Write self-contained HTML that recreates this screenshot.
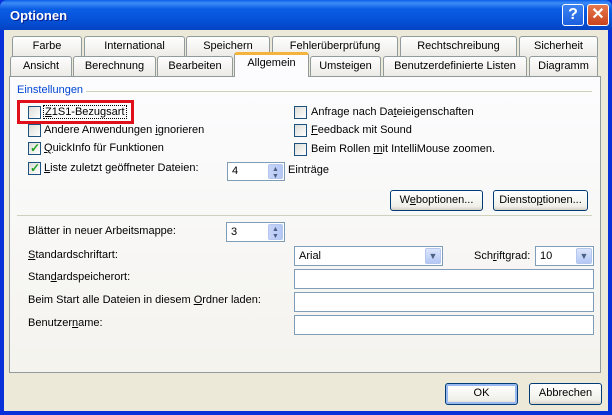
<!DOCTYPE html>
<html><head><meta charset="utf-8"><style>
*{box-sizing:border-box;margin:0;padding:0}
body{width:612px;height:415px;position:relative;overflow:hidden;background:#0831d9;font-family:"Liberation Sans",sans-serif;font-size:11px;color:#000}
.a{position:absolute;white-space:nowrap}
#title{left:0;top:0;width:612px;height:30px;background:linear-gradient(#0a5fe8 0%,#3d8bf6 10%,#0b5de5 30%,#0451d6 70%,#0542c2 100%);border-radius:7px 7px 0 0}
#body{left:4px;top:30px;width:604px;height:381px;background:#ece9d8}
.tab{position:absolute;height:21px;border:1px solid #919b9c;border-bottom:none;border-radius:3px 3px 0 0;background:linear-gradient(#fefefe,#ecebe6);text-align:center;line-height:19px;white-space:nowrap}
#panel{left:9px;top:76px;width:592px;height:297px;border:1px solid #919b9c;background:linear-gradient(#fcfcfe,#f4f3ee)}
.cb{position:absolute;width:13px;height:13px;border:1px solid #1c5180;background:linear-gradient(135deg,#dcdcd7,#fff)}
.ck{position:absolute;left:1px;top:-2px;color:#21a121;font-size:12px;font-weight:bold}
.in{position:absolute;background:#fff;border:1px solid #7f9db9}
.spin{position:absolute;right:1px;top:1px;width:15px;bottom:1px;background:linear-gradient(90deg,#c6d3f7,#b4c8f5);border-radius:2px;border:1px solid #b5c7ef;font-size:7px;color:#4d6185;text-align:center;line-height:7px;padding-top:1px}
.dd{position:absolute;right:1px;top:1px;width:16px;bottom:1px;background:linear-gradient(#dbe5fc,#b4c8f5);border:1px solid #b5c7ef;border-radius:2px;color:#4d6185;text-align:center;font-size:9px;line-height:15px}
.btn{position:absolute;border:1px solid #003c74;border-radius:3px;background:linear-gradient(#fff,#f0f0ea 80%,#d6d0c5);text-align:center;line-height:19px}
u{text-decoration:underline}
</style></head><body>
<div class="a" id="title"></div>
<div class="a" style="left:10px;top:8px;color:#fff;font-weight:bold;font-size:13px;text-shadow:1px 1px #0a1e8f">Optionen</div>
<div class="a" style="left:562px;top:4px;width:22px;height:22px;border:1px solid #fff;border-radius:3px;background:linear-gradient(#3c83f0,#1c5fe0);color:#fff;font-weight:bold;font-size:16px;text-align:center;line-height:20px">?</div>
<div class="a" style="left:587px;top:4px;width:22px;height:22px;border:1px solid #fff;border-radius:3px;background:linear-gradient(#e7794f,#c9431c);color:#fff;font-weight:bold;font-size:16px;text-align:center;line-height:20px">✕</div>
<div class="a" id="body"></div>
<div class="a" id="panel"></div>
<div class="tab" style="left:12px;top:36px;width:70px">Farbe</div>
<div class="tab" style="left:84px;top:36px;width:101px">International</div>
<div class="tab" style="left:186px;top:36px;width:84px">Speichern</div>
<div class="tab" style="left:272px;top:36px;width:126px">Fehlerüberprüfung</div>
<div class="tab" style="left:400px;top:36px;width:117px">Rechtschreibung</div>
<div class="tab" style="left:519px;top:36px;width:79px">Sicherheit</div>
<div class="tab" style="left:10px;top:56px;width:62px;height:20px">Ansicht</div>
<div class="tab" style="left:73px;top:56px;width:83px;height:20px">Berechnung</div>
<div class="tab" style="left:157px;top:56px;width:76px;height:20px">Bearbeiten</div>
<div class="tab" style="left:234px;top:52px;width:75px;height:25px;background:#fcfcfe;border-top:3px solid #f3b33d;line-height:17px">Allgemein</div>
<div class="tab" style="left:310px;top:56px;width:71px;height:20px">Umsteigen</div>
<div class="tab" style="left:383px;top:56px;width:144px;height:20px">Benutzerdefinierte Listen</div>
<div class="tab" style="left:529px;top:56px;width:69px;height:20px">Diagramm</div>

<div class="a" style="left:17px;top:84px;color:#0046d5">Einstellungen</div>
<div class="a" style="left:86px;top:91px;width:506px;height:1px;background:#d0d0bf"></div>
<div class="a" style="left:17px;top:100px;width:117px;height:24px;border:3px solid #e0101a"></div>
<div class="cb" style="left:28px;top:106px"></div><div class="a" style="left:43px;top:105px;border:1px dotted #000;padding:0 1px"><u>Z</u>1S1-Bezugsart</div>
<div class="cb" style="left:28px;top:124px"></div><div class="a" style="left:44px;top:124px">Andere Anwendungen <u>i</u>gnorieren</div>
<div class="cb" style="left:28px;top:142px"><span class="ck">✓</span></div><div class="a" style="left:44px;top:142px"><u>Q</u>uickInfo für Funktionen</div>
<div class="cb" style="left:28px;top:162px"><span class="ck">✓</span></div><div class="a" style="left:44px;top:162px"><u>L</u>iste zuletzt geöffneter Dateien:</div>
<div class="in" style="left:227px;top:162px;width:58px;height:19px"><span class="a" style="left:4px;top:2px">4</span><div class="spin">▲<br>▼</div></div>
<div class="a" style="left:288px;top:164px">Einträ<u>g</u>e</div>
<div class="cb" style="left:294px;top:106px"></div><div class="a" style="left:311px;top:106px">Anfrage nach Da<u>t</u>eieigenschaften</div>
<div class="cb" style="left:294px;top:124px"></div><div class="a" style="left:311px;top:124px"><u>F</u>eedback mit Sound</div>
<div class="cb" style="left:294px;top:143px"></div><div class="a" style="left:311px;top:143px">Beim Rollen <u>m</u>it IntelliMouse zoomen.</div>
<div class="btn" style="left:390px;top:190px;width:93px;height:21px">W<u>e</u>boptionen...</div>
<div class="btn" style="left:493px;top:190px;width:95px;height:21px">Diensto<u>p</u>tionen...</div>
<div class="a" style="left:17px;top:215px;width:575px;height:1px;background:#d0d0bf"></div>

<div class="a" style="left:28px;top:225px">Blätter in neuer Arbeitsmappe:</div>
<div class="in" style="left:226px;top:222px;width:59px;height:20px"><span class="a" style="left:4px;top:3px">3</span><div class="spin">▲<br>▼</div></div>
<div class="a" style="left:28px;top:249px"><u>S</u>tandardschriftart:</div>
<div class="in" style="left:294px;top:246px;width:149px;height:20px"><span class="a" style="left:4px;top:3px">Arial</span><div class="dd">▼</div></div>
<div class="a" style="left:474px;top:250px">Sch<u>r</u>iftgrad:</div>
<div class="in" style="left:535px;top:246px;width:59px;height:20px"><span class="a" style="left:4px;top:3px">10</span><div class="dd">▼</div></div>
<div class="a" style="left:28px;top:271px">Stan<u>d</u>ardspeicherort:</div>
<div class="in" style="left:294px;top:269px;width:300px;height:20px"></div>
<div class="a" style="left:28px;top:294px">Beim Start alle Dateien in diesem <u>O</u>rdner laden:</div>
<div class="in" style="left:294px;top:292px;width:300px;height:20px"></div>
<div class="a" style="left:28px;top:317px">Benutzer<u>n</u>ame:</div>
<div class="in" style="left:294px;top:315px;width:300px;height:20px"></div>

<div class="btn" style="left:445px;top:383px;width:73px;height:22px;border-color:#003c74;box-shadow:inset 0 0 0 2px #98b8f0">OK</div>
<div class="btn" style="left:529px;top:383px;width:73px;height:22px">Abbrechen</div>
</body></html>
